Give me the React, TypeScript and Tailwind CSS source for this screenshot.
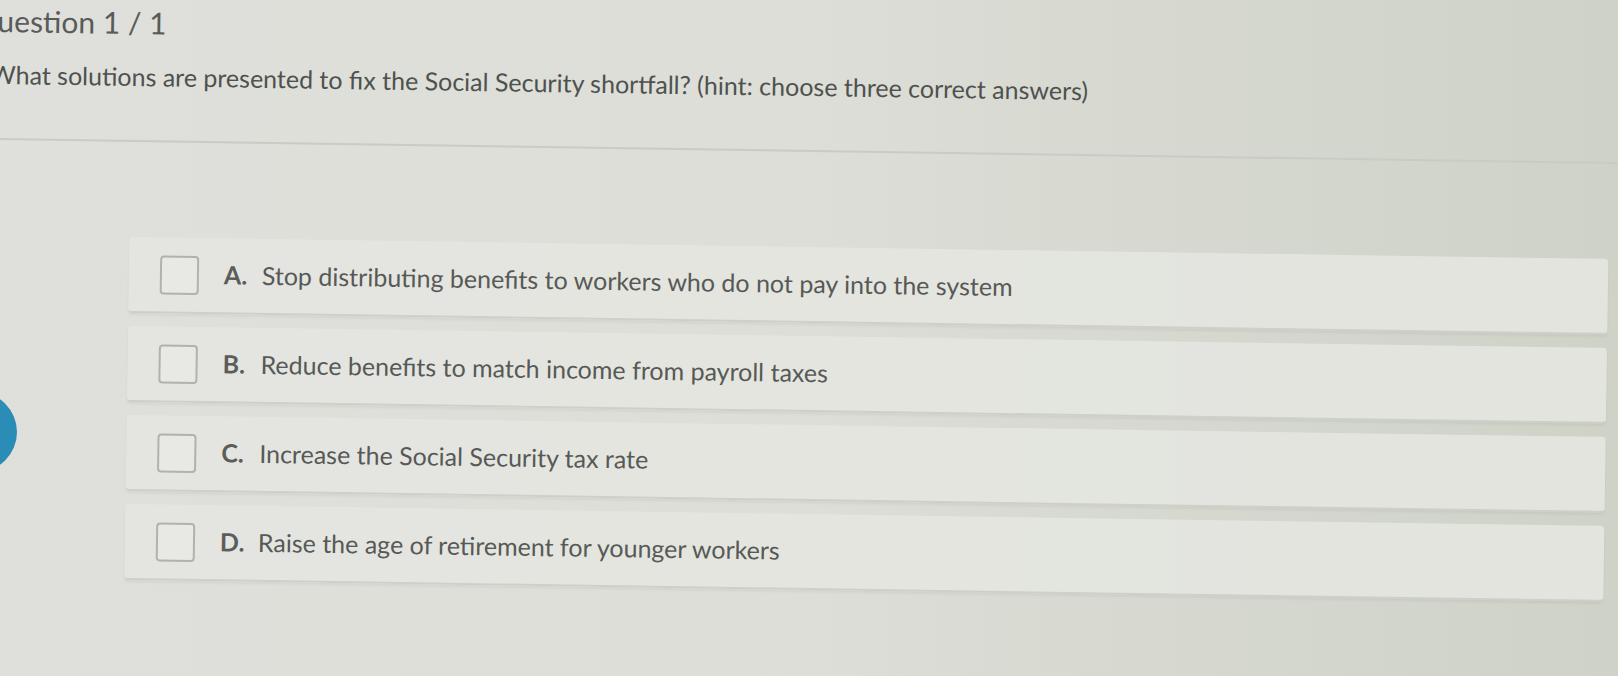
import React from "react";

const options = [
  { letter: "A.", text: "Stop distributing benefits to workers who do not pay into the system" },
  { letter: "B.", text: "Reduce benefits to match income from payroll taxes" },
  { letter: "C.", text: "Increase the Social Security tax rate" },
  { letter: "D.", text: "Raise the age of retirement for younger workers" },
];

export default function App() {
  return (
    <div
      className="relative w-[1618px] h-[676px] overflow-hidden bg-gradient-to-r from-[#dfe0db] via-[#dcded7] to-[#cfd2c7] text-[#555755]"
      style={{ fontFamily: "Lato, 'Open Sans', sans-serif" }}
    >
      <div className="flex origin-top-left rotate-[0.85deg] flex-col">
        <h1 className="ml-[-26px] h-[40px] text-[30px] leading-[40px] text-[#595b59]">
          Question 1 / 1
        </h1>
        <p className="ml-[-9px] mt-[19px] h-[30px] whitespace-nowrap text-[25px] leading-[30px] text-[#4f514f]">
          What solutions are presented to fix the Social Security shortfall? (hint: choose three correct answers)
        </p>
        <div className="mt-[49px] h-[2px] w-[1660px] bg-[#c9cbc4]" />
        <div className="ml-[133px] mr-[6px] mt-[95px] flex flex-col gap-[13px]">
          {options.map((o) => (
            <div
              key={o.letter}
              className="flex h-[76px] items-center rounded-[4px] border-b-2 border-[#cdcfc8] bg-[#e4e5e0]/90 pl-[31px] shadow-[0_2px_3px_rgba(0,0,0,0.05)]"
            >
              <div className="h-[39px] w-[39px] shrink-0 rounded-[4px] border-2 border-[#b0b2ad] bg-[#e8e9e4]" />
              <span className="ml-[25px] w-[38px] text-[25px] font-bold text-[#5b5d5b]">{o.letter}</span>
              <span className="text-[25px] text-[#575957]">{o.text}</span>
            </div>
          ))}
        </div>
      </div>
      <div className="absolute left-[-63px] top-[392px] h-[80px] w-[80px] rounded-full bg-[#2b8db6]" />
    </div>
  );
}
